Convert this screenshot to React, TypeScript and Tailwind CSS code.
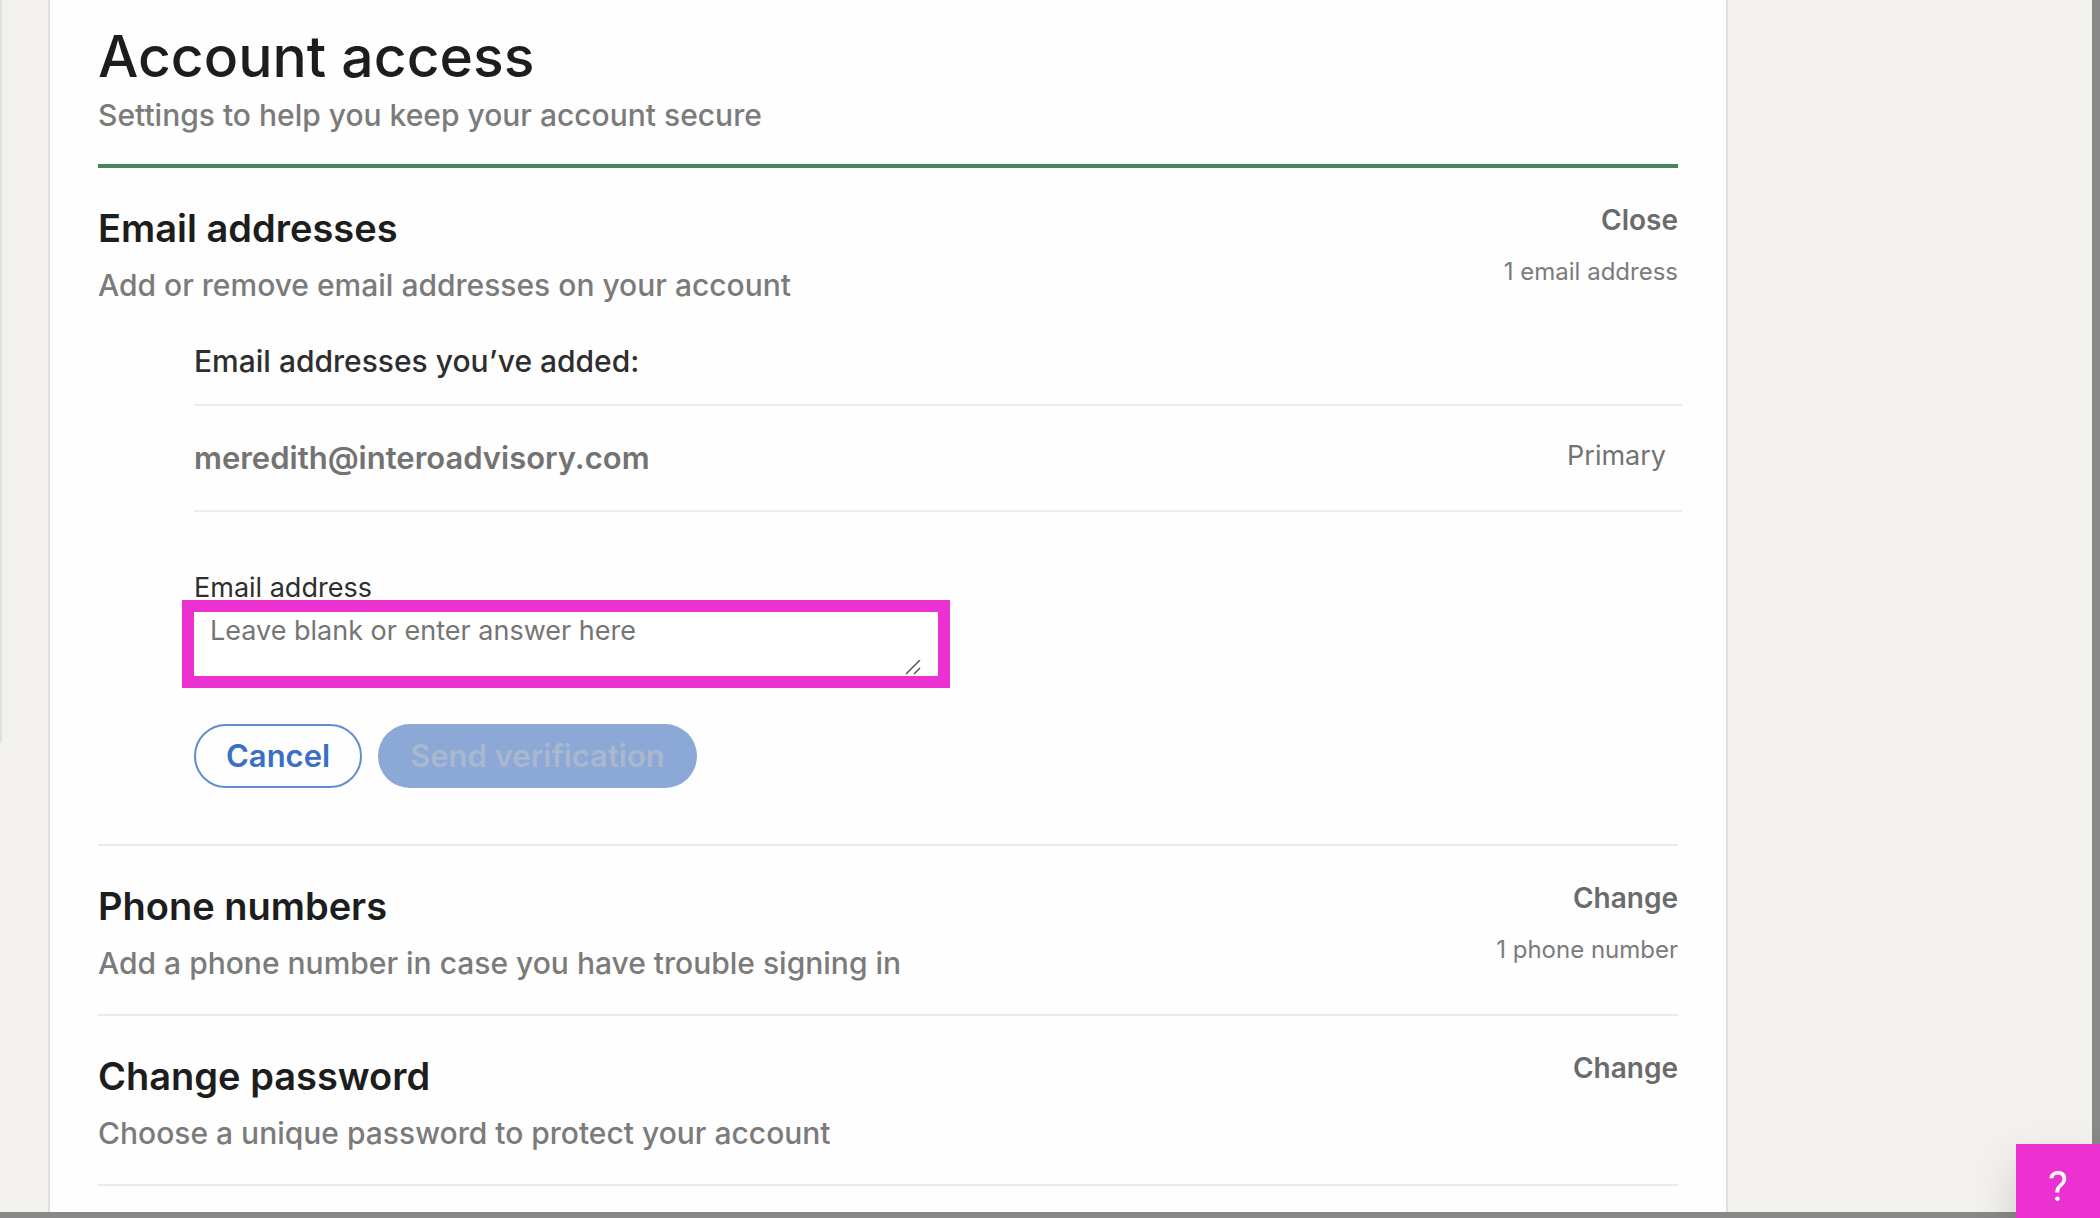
import React, { useState, type ReactNode } from "react";

interface SECTION_TYPES {
  title: string;
  description: string;
  action: string;
  status?: string;
  children?: ReactNode;
}

const App = () => {
  const [email, setemail] = useState("");

  return (
    <div className="relative flex h-screen overflow-hidden border-r-8 border-b-6 border-[#888888] bg-[#f2f1ed] font-['Inter',sans-serif]">
      {/* edge of the side menu */}
      <aside className="h-[743px] w-0.5 shrink-0 rounded-br-sm bg-[#dfe0e3]" />

      <main className="ml-[46px] w-[80vw] shrink-0 self-start min-h-full border-x-2 border-[#dfe0e3] bg-[#fefefe] px-12 pt-[19px]">
        <header className="border-b-4 border-[#46855e] pb-[29px]">
          <h1 className="text-[57px] leading-[76px] font-medium text-[#1d1d1d]">
            Account access
          </h1>
          <p className="text-[30px] leading-10 font-medium text-[#7b7b7b]">
            Settings to help you keep your account secure
          </p>
        </header>

        <Section
          title="Email addresses"
          description="Add or remove email addresses on your account"
          action="Close"
          status="1 email address"
        >
          <div className="mt-9 -mr-1 ml-24">
            <h3 className="pb-[23px] text-[30px] leading-10 font-medium text-[#2e2e2e]">
              Email addresses you’ve added:
            </h3>
            <div className="flex items-start justify-between border-y-2 border-[#ececec] py-8 pr-4 text-[#737373]">
              <p className="text-[31px] leading-10 font-semibold">
                meredith@interoadvisory.com
              </p>
              <p className="text-[27px] leading-9">Primary</p>
            </div>
          </div>

          {/* add email form  */}
          <form
            onSubmit={(e) => e.preventDefault()}
            className="mt-16 ml-24 pb-[25px]"
          >
            <label
              htmlFor="email"
              className="block text-[27px] leading-6 text-[#2e2e2e]"
            >
              Email address
            </label>
            <div className="relative -ml-3 max-w-3xl">
              <textarea
                id="email"
                name="email"
                rows={1}
                value={email}
                onChange={(e) => setemail(e.target.value)}
                placeholder="Leave blank or enter answer here"
                className="block h-22 w-full resize-none overflow-hidden border-12 border-[#eb32d0] bg-white px-4 pt-px text-[27px] leading-9 text-[#2e2e2e] outline-none placeholder:text-[#757575]"
              />
              <svg
                className="pointer-events-none absolute right-[29px] bottom-3 size-4"
                viewBox="0 0 16 16"
                fill="none"
                stroke="#555"
                strokeWidth="1.5"
              >
                <path d="M1 14 15 0M9 14l6-6" />
              </svg>
            </div>
            <div className="mt-9 flex gap-4">
              <button
                type="button"
                onClick={() => setemail("")}
                className="h-16 rounded-full border-2 border-[#5f8fd0] px-[30px] text-[31px] font-semibold text-[#3a6fc4]"
              >
                Cancel
              </button>
              <button
                type="submit"
                className="h-16 rounded-full bg-[#8ca8d6] px-8 text-[31px] font-semibold text-[#a9b7cf]"
              >
                Send verification
              </button>
            </div>
          </form>
        </Section>

        <Section
          title="Phone numbers"
          description="Add a phone number in case you have trouble signing in"
          action="Change"
          status="1 phone number"
        />
        <Section
          title="Change password"
          description="Choose a unique password to protect your account"
          action="Change"
        />
      </main>

      <button
        type="button"
        aria-label="Help"
        className="fixed right-0 bottom-0 h-[74px] w-21 bg-[#eb32d0] pt-2.5 font-['Roboto',sans-serif] text-[42px] text-white shadow-[0_20px_44px_rgba(0,0,0,0.15)]"
      >
        ?
      </button>
    </div>
  );
};

export default App;

const Section: React.FC<SECTION_TYPES> = (props) => {
  return (
    <section className="border-b-2 border-[#e9eaeb] pt-[34px] pb-[31px]">
      <div className="flex items-start justify-between">
        <div className="pt-0.5">
          <h2 className="text-[38px] leading-12 font-semibold text-[#1d1d1d]">
            {props.title}
          </h2>
          <p className="mt-[13px] text-[30px] leading-10 font-medium text-[#7b7b7b]">
            {props.description}
          </p>
        </div>
        <div className="flex flex-col items-end">
          <button
            type="button"
            className="text-[28px] leading-9 font-semibold text-[#6b6b6b]"
          >
            {props.action}
          </button>
          {props.status && (
            <p className="mt-[18px] text-2xl leading-8 text-[#7b7b7b]">
              {props.status}
            </p>
          )}
        </div>
      </div>
      {props.children}
    </section>
  );
};
